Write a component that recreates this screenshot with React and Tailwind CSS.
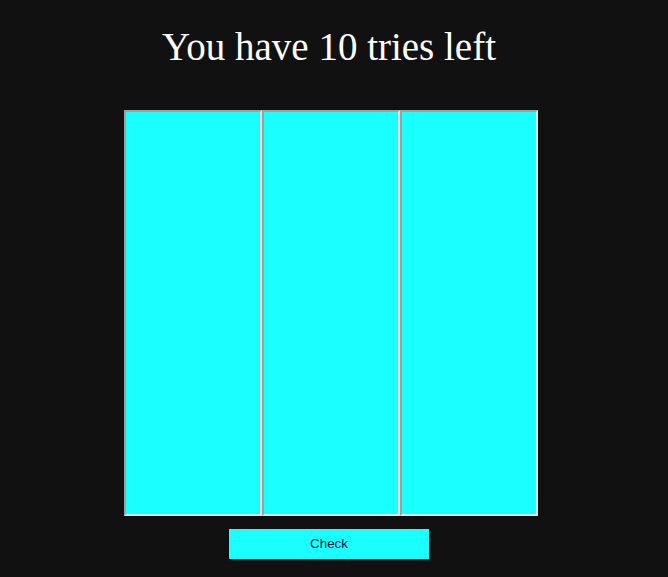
export default function App() {
  const columns = [0, 1, 2];

  return (
    <div className="min-h-[577px] w-full bg-[#111111]">
      <div className="flex w-[658px] flex-col items-center">
        <h1 className="mt-[24px] font-['Liberation_Serif','Times_New_Roman',serif] text-[39px] leading-[45px] text-white">
          You have 10 tries left
        </h1>
        <div className="mt-[41px] ml-[4px] flex h-[406px] w-[414px]">
          {columns.map((c) => (
            <div
              key={c}
              className="h-full w-[138px] border-2 border-t-[#a0a0a0] border-l-[#a0a0a0] border-b-[#e3e3e3] border-r-[#e3e3e3] bg-[#1affff]"
            />
          ))}
        </div>
        <button className="mt-[13px] h-[30px] w-[200px] bg-[#1affff] font-['Liberation_Sans',Arial,sans-serif] text-[13.333px] text-[#101040]">
          Check
        </button>
      </div>
    </div>
  );
}
